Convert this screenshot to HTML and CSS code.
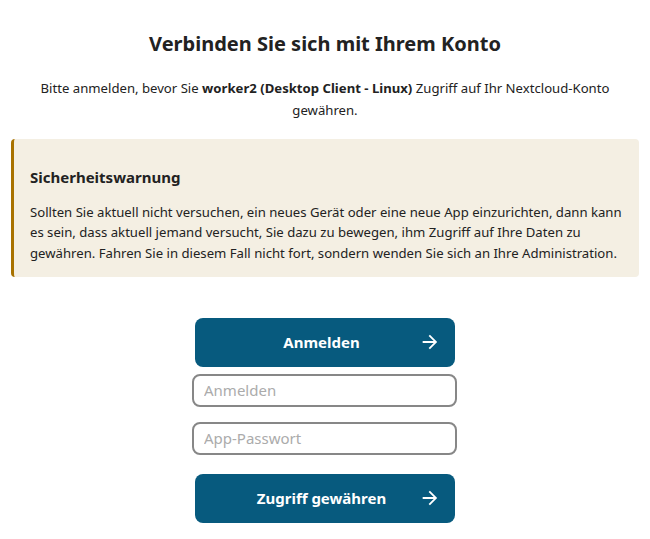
FILE: index.html
```html
<!DOCTYPE html>
<html lang="de">
<head>
<meta charset="utf-8">
<link rel="stylesheet" href="styles.css">
</head>
<body>
<main class="page">
  <h2 class="title">Verbinden Sie sich mit Ihrem Konto</h2>
  <p class="intro">Bitte anmelden, bevor Sie <strong>worker2 (Desktop Client - Linux)</strong> Zugriff auf Ihr Nextcloud-Konto gewähren.</p>
  <div class="warning">
    <h3 class="warning-title">Sicherheitswarnung</h3>
    <p class="warning-text">Sollten Sie aktuell nicht versuchen, ein neues Gerät oder eine neue App einzurichten, dann kann es sein, dass aktuell jemand versucht, Sie dazu zu bewegen, ihm Zugriff auf Ihre Daten zu gewähren. Fahren Sie in diesem Fall nicht fort, sondern wenden Sie sich an Ihre Administration.</p>
  </div>
  <form class="form">
    <button type="button" class="btn">
      <span class="btn-label">Anmelden</span>
      <svg class="btn-icon" width="22" height="22" viewBox="0 0 24 24"><path d="M4 11v2h12l-5.5 5.5 1.42 1.42L19.840 12l-7.92-7.92L10.5 5.5 16 11H4z" fill="#fff"/></svg>
    </button>
    <input class="field" type="text" placeholder="Anmelden">
    <input class="field field-second" type="password" placeholder="App-Passwort">
    <button type="button" class="btn btn-grant">
      <span class="btn-label">Zugriff gewähren</span>
      <svg class="btn-icon" width="22" height="22" viewBox="0 0 24 24"><path d="M4 11v2h12l-5.5 5.5 1.42 1.42L19.84 12l-7.92-7.92L10.5 5.5 16 11H4z" fill="#fff"/></svg>
    </button>
  </form>
</main>
</body>
</html>
```
FILE: styles.css
```css
* { box-sizing: border-box; }
body {
  margin: 0;
  background: #fff;
  font-family: "Noto Sans", "DejaVu Sans", sans-serif;
  color: #222;
}
.page {
  width: 650px;
  padding: 30px 11px 0 11px;
}
.title {
  margin: 0;
  font-size: 20px;
  font-weight: 700;
  line-height: 28px;
  text-align: center;
  color: #222;
}
.intro {
  margin: 19px 10px 0;
  font-size: 13.15px;
  line-height: 22px;
  text-align: center;
}
.intro strong { font-weight: 700; }
.warning {
  margin-top: 18px;
  background: #f4efe3;
  border-left: 3px solid #a87200;
  border-radius: 4px;
  padding: 27px 16px 14px 16px;
}
.warning-title {
  margin: 0 0 14px;
  font-size: 15px;
  font-weight: 700;
  line-height: 22px;
}
.warning-text {
  margin: 0;
  font-size: 13.15px;
  line-height: 20.3px;
}
.form {
  margin-top: 41px;
  padding-right: 1px;
  display: flex;
  flex-direction: column;
  align-items: center;
}
.btn {
  width: 260px;
  height: 49px;
  border: none;
  border-radius: 8px;
  background: #075a7e;
  color: #fff;
  font-family: inherit;
  font-size: 15px;
  font-weight: 700;
  display: flex;
  align-items: center;
  padding: 0 14px 0 0;
}
.btn-label { flex: 1; text-align: center; padding-left: 34px; }
.btn-icon { flex: none; margin-left: 4px; }
.field {
  width: 265px;
  height: 33px;
  margin-top: 7px;
  border: 2px solid #878787;
  border-radius: 8px;
  padding: 0 10px;
  font-family: inherit;
  font-size: 15px;
  color: #222;
  background: #fff;
}
.field-second { margin-top: 15px; }
.field::placeholder { color: #ababab; }
.btn-grant { margin-top: 19px; }
```
